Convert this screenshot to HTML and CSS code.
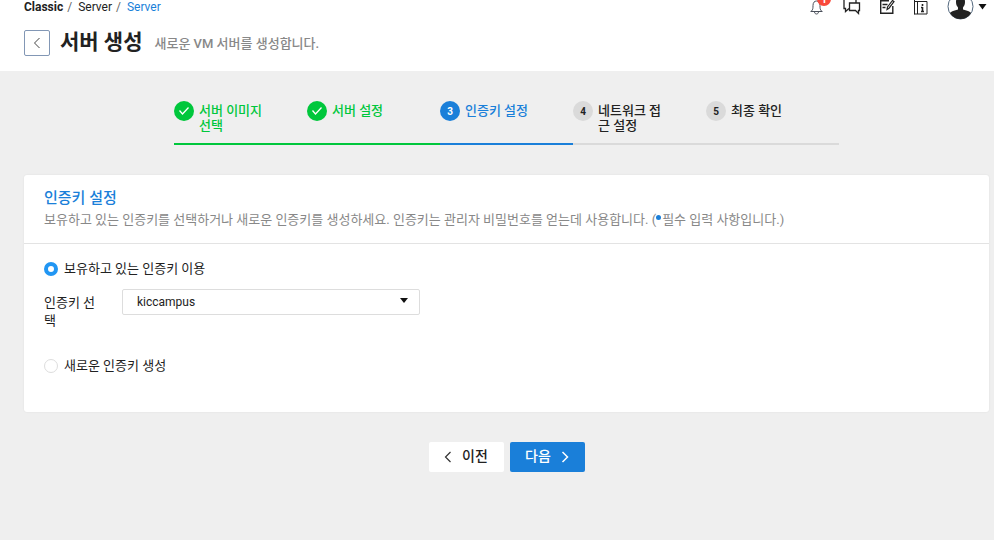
FILE: index.html
```html
<!DOCTYPE html>
<html lang="ko">

<head>
    <meta charset="UTF-8" />
    <meta name="viewport" content="width=device-width, initial-scale=1.0" />
    <link rel="stylesheet" href="styles.css">
    <title>서버 생성</title>
</head>

<body>

    <header class="header">
        <div class="topbar">
            <nav class="breadcrumb">
                <strong>Classic</strong>
                <span class="slash">/</span>
                <a href="#">Server</a>
                <span class="slash">/</span>
                <a href="#" class="current">Server</a>
            </nav>
            <div class="actions">
                <button class="icon-btn bell" aria-label="알림">
                    <svg width="16" height="20" viewBox="0 0 16 20" fill="none" stroke="#4a4f5a">
                        <path d="M1.500 11.500h12M2.500 11c1.500-1.500 1.500-3 1.500-5.500C4 2.500 5.500 1 7.500 1S11 2.500 11 5.500C11 8 11 9.500 12.500 11M5.500 12c.3 1.500 1 2 2 2s1.700-.5 2-2" />
                    </svg>
                    <span class="badge">1</span>
                </button>
                <button class="icon-btn chat" aria-label="문의">
                    <svg width="18" height="20" viewBox="0 0 18 20" fill="none" stroke="#222" stroke-width="1.3">
                        <path d="M13 3V-1H1v9.500h1.500v3l3.500-3" />
                        <path d="M6.500 3h10v7.500H15.500v3l-3-3h-6z" fill="#fff" />
                    </svg>
                </button>
                <button class="icon-btn note" aria-label="메모">
                    <svg width="16" height="20" viewBox="0 0 16 20" fill="none" stroke="#222" stroke-width="1.4">
                        <path d="M10 .7H1.700v12.600h12.100V6M3.500 4.500h5M3.500 7.500h3" />
                        <path d="M8 9.500l.5-2.500L13.500.5l1.500 1.200L10 8.200z" stroke-width="1.200" />
                    </svg>
                </button>
                <button class="icon-btn guide" aria-label="가이드">
                    <svg width="16" height="20" viewBox="0 0 16 20" fill="none" stroke="#222">
                        <path d="M1.500-1v15.500M4.500 1.500v12.500M1.500 1.500h12.500V14H1.500" />
                        <path d="M9.500 4v2M9.500 7v4.500M8 7.500h1.500M8 11.500h3" stroke-width="1.600" />
                    </svg>
                </button>
                <button class="icon-btn user" aria-label="내 계정">
                    <svg width="40" height="20" viewBox="0 0 40 20">
                        <circle cx="13.500" cy="6.500" r="12.500" fill="#fff" stroke="#52677d" />
                        <path d="M9 2c0-4 2-6 4.500-6S18-2 18 2c0 2.500-.8 4-2 5.500v2l5 1.500c1.500.5 2.500 1.300 3 2-2.300 4-6 6-10.500 6S5.300 17 3 13c.5-.7 1.500-1.500 3-2l5-1.500v-2C9.800 6 9 4.500 9 2z" fill="#222" />
                        <path d="M31.500 4h8l-4 5.500z" fill="#111" />
                    </svg>
                </button>
            </div>
        </div>
        <div class="title-row">
            <button class="back" aria-label="뒤로">
                <svg width="8" height="12" viewBox="0 0 8 12" fill="none" stroke="#444">
                    <path d="M6.500 1L1.500 6l5 5" />
                </svg>
            </button>
            <h1>서버 생성</h1>
            <p>새로운 VM 서버를 생성합니다.</p>
        </div>
    </header>

    <main class="content">
        <ol class="steps">
            <li class="step done">
                <span class="circle">
                    <svg width="12" height="10" viewBox="0 0 12 10" fill="none" stroke="#fff" stroke-width="1.300">
                        <path d="M1.500 4.500l3 3.500L10.500 1.500" />
                    </svg>
                </span>
                <span class="step-name">서버 이미지 선택</span>
            </li>
            <li class="step done">
                <span class="circle">
                    <svg width="12" height="10" viewBox="0 0 12 10" fill="none" stroke="#fff" stroke-width="1.300">
                        <path d="M1.500 4.500l3 3.500L10.500 1.500" />
                    </svg>
                </span>
                <span class="step-name">서버 설정</span>
            </li>
            <li class="step active">
                <span class="circle">3</span>
                <span class="step-name">인증키 설정</span>
            </li>
            <li class="step">
                <span class="circle">4</span>
                <span class="step-name">네트워크 접근 설정</span>
            </li>
            <li class="step">
                <span class="circle">5</span>
                <span class="step-name">최종 확인</span>
            </li>
        </ol>

        <section class="card">
            <div class="card-header">
                <h2>인증키 설정</h2>
                <p>보유하고 있는 인증키를 선택하거나 새로운 인증키를 생성하세요. 인증키는 관리자 비밀번호를 얻는데 사용합니다. (<span class="dot"></span>필수 입력 사항입니다.)</p>
            </div>
            <div class="card-body">
                <label class="radio">
                    <input type="radio" name="key" checked>
                    보유하고 있는 인증키 이용
                </label>
                <div class="field">
                    <label for="key-select">인증키 선택</label>
                    <div class="select">
                        <select id="key-select">
                            <option>kiccampus</option>
                        </select>
                        <svg class="arrow" width="8" height="5" viewBox="0 0 8 5">
                            <path d="M0 0h8L4 5z" fill="#111" />
                        </svg>
                    </div>
                </div>
                <label class="radio">
                    <input type="radio" name="key">
                    새로운 인증키 생성
                </label>
            </div>
        </section>

        <div class="buttons">
            <button class="btn">
                <svg width="8" height="12" viewBox="0 0 8 12" fill="none" stroke="#333" stroke-width="1.200">
                    <path d="M6.500 1L1.500 6l5 5" />
                </svg>
                <span>이전</span>
            </button>
            <button class="btn primary">
                <span>다음</span>
                <svg width="8" height="12" viewBox="0 0 8 12" fill="none" stroke="#fff" stroke-width="1.500">
                    <path d="M1.500 1l5 5-5 5" />
                </svg>
            </button>
        </div>
    </main>

</body>

</html>
```

FILE: styles.css
```css
:root {
    --blue: #1a7fd9;
    --green: #00c73c;
    --grey: #dadada;
    --text: #222;
}

* {
    box-sizing: border-box;
}

body {
    margin: 0;
    background-color: #efefef;
    color: var(--text);
    font-family: Roboto, 'Noto Sans CJK KR', sans-serif;
    font-size: 13px;
}

h1,
h2,
p {
    margin: 0;
}

a {
    color: inherit;
    text-decoration: none;
}

button {
    font-family: inherit;
    cursor: pointer;
}

svg {
    display: block;
}

/* header */
.header {
    background-color: white;
    height: 71px;
    padding: 0 7px 0 24px;
}

.topbar {
    display: flex;
    justify-content: space-between;
    height: 28px;
}

.breadcrumb {
    display: flex;
    gap: 4px;
    font-size: 12px;
    line-height: 14px;
}

.breadcrumb .slash {
    color: #666;
    margin-right: 2px;
}

.breadcrumb .current {
    color: var(--blue);
}

.actions {
    display: flex;
    align-items: flex-start;
    gap: 18px;
}

.icon-btn {
    position: relative;
    background: none;
    border: 0;
    padding: 0;
}

/* the badge hangs over the top of the bell */
.badge {
    position: absolute;
    top: -8px;
    left: 8px;
    width: 14px;
    height: 14px;
    border-radius: 50%;
    background-color: #f9493b;
    color: white;
    font-size: 10px;
    font-weight: 700;
    line-height: 16px;
}

.title-row {
    display: flex;
    align-items: center;
}

.back {
    display: flex;
    align-items: center;
    justify-content: center;
    width: 26px;
    height: 26px;
    margin: 2px 10px 0 0;
    padding: 0;
    background-color: white;
    border: 1px solid #8297b5;
    border-radius: 2px;
}

.title-row h1 {
    font-size: 21px;
    font-weight: 700;
    line-height: 28px;
    margin-right: 12px;
}

.title-row p {
    color: #888;
    font-size: 13px;
    font-weight: 500;
}

/* steps */
.content {
    padding: 30px 5px 30px 24px;
}

.steps {
    display: grid;
    grid-template-columns: repeat(5, 1fr);
    list-style: none;
    max-width: 665px;
    margin: 0 auto 30px;
    padding: 0;
}

.step {
    display: flex;
    align-items: flex-start;
    gap: 5px;
    height: 44px;
    border-bottom: 2px solid var(--grey);
}

.circle {
    display: flex;
    align-items: center;
    justify-content: center;
    flex-shrink: 0;
    width: 20px;
    height: 20px;
    border-radius: 50%;
    background-color: var(--grey);
    font-size: 10px;
    font-weight: 700;
}

.step-name {
    width: 68px;
    padding-top: 2px;
    font-weight: 500;
    line-height: 15px;
}

.step.done {
    color: var(--green);
    border-color: var(--green);
}

.step.done .circle {
    background-color: var(--green);
}

.step.active {
    color: var(--blue);
    border-color: var(--blue);
}

.step.active .circle {
    background-color: var(--blue);
    color: white;
}

/* card */
.card {
    background-color: white;
    border-radius: 3px;
    box-shadow: 0 0 2px rgba(0, 0, 0, 0.08);
}

.card-header {
    padding: 12px 20px;
    border-bottom: 1px solid #e3e3e3;
}

.card-header h2 {
    color: var(--blue);
    font-size: 15px;
    font-weight: 500;
    line-height: 22px;
}

.card-header p {
    color: #888;
    line-height: 22px;
}

.dot {
    display: inline-block;
    width: 5px;
    height: 5px;
    margin: 0 1px 0 0;
    border-radius: 50%;
    background-color: var(--blue);
    vertical-align: 4px;
}

.card-body {
    padding: 15px 20px 36px;
}

.radio {
    display: flex;
    align-items: center;
    gap: 6px;
    line-height: 20px;
}

.radio input {
    appearance: none;
    width: 14px;
    height: 14px;
    margin: 0;
    border: 1px solid #ddd;
    border-radius: 50%;
    background-color: white;
}

.radio input:checked {
    border: 4px solid #2196f3;
}

.field {
    display: flex;
    align-items: flex-start;
    gap: 18px;
    margin: 10px 0 26px;
}

.field label {
    width: 60px;
    padding-top: 5px;
    line-height: 18px;
}

.select {
    position: relative;
    width: 298px;
}

.select select {
    appearance: none;
    display: block;
    width: 100%;
    height: 26px;
    padding: 0 14px;
    background-color: white;
    border: 1px solid #ddd;
    border-radius: 2px;
    color: var(--text);
    font-family: inherit;
    font-size: 12px;
}

.select .arrow {
    position: absolute;
    top: 9px;
    right: 12px;
    pointer-events: none;
}

/* bottom buttons */
.buttons {
    display: flex;
    justify-content: center;
    gap: 6px;
    margin-top: 30px;
}

.btn {
    display: flex;
    align-items: center;
    justify-content: center;
    gap: 10px;
    width: 75px;
    height: 30px;
    padding: 0;
    background-color: white;
    border: 0;
    border-radius: 2px;
    color: var(--text);
    font-size: 14px;
    font-weight: 500;
}

.btn span {
    padding-bottom: 4px;
}

.btn.primary {
    background-color: var(--blue);
    color: white;
}
```
